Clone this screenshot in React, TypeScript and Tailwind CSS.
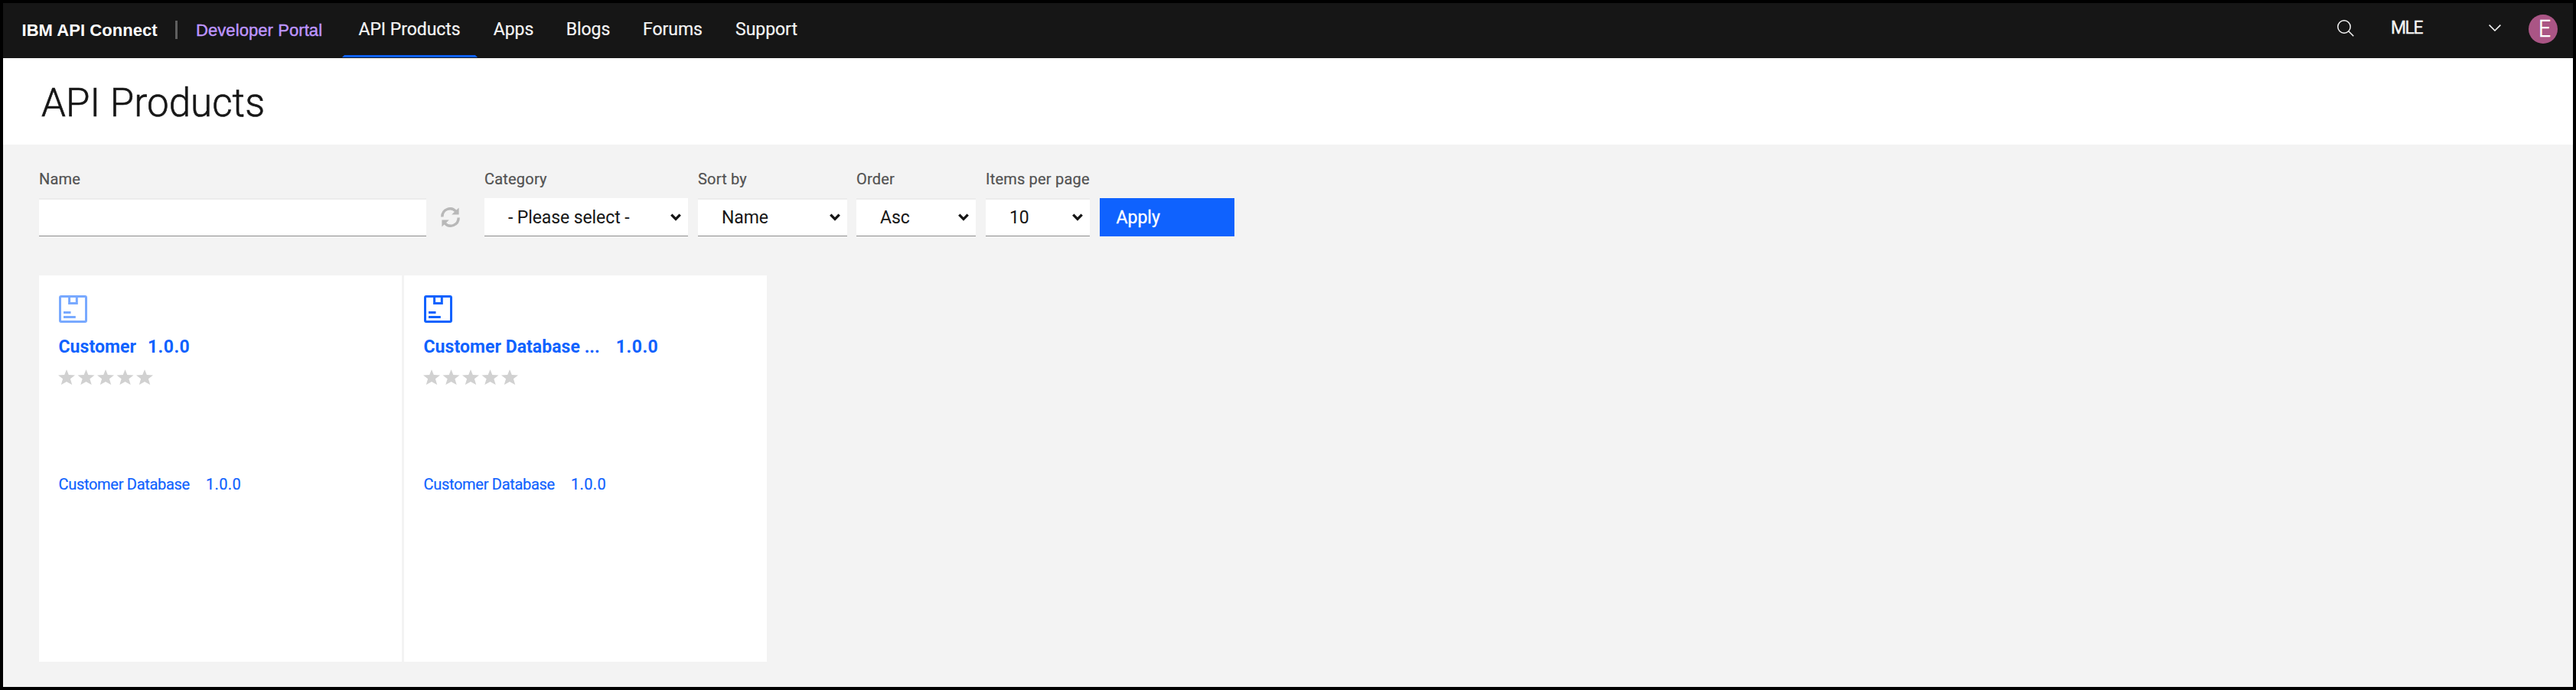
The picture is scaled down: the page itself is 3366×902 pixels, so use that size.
import type { ReactNode } from "react";

const NAV = [
  { label: "API Products", width: "w-[177px]", active: true },
  { label: "Apps", width: "w-[95px]" },
  { label: "Blogs", width: "w-[100px]" },
  { label: "Forums", width: "w-[121px]" },
  { label: "Support", width: "w-[124px]" },
];

function Header() {
  return (
    <header className="flex h-[72px] items-start bg-[#161616] text-[23px] text-[#f4f4f4]">
      <div className="flex h-[68px] w-[442.5px] items-center pl-[24.5px] font-['Liberation_Sans',sans-serif] text-[22px]">
        <span className="w-[200.5px] pt-0.5 font-bold tracking-[0.05px] whitespace-nowrap text-white">IBM API Connect</span>
        <span className="mt-0.5 h-6 w-[2.5px] bg-[#5f5f5f]" />
        <span className="ml-[24.5px] pt-0.5 tracking-[0.08px] whitespace-nowrap text-[#be95ff] [-webkit-text-stroke:0.4px_#be95ff]">
          Developer Portal
        </span>
      </div>
      <nav className="flex">
        {NAV.map((n) => (
          <a key={n.label} className={`${n.width} flex flex-col whitespace-nowrap`}>
            <span className="flex h-[68px] items-center justify-center pt-[3px] tracking-[-0.05px] [-webkit-text-stroke:0.2px_#f4f4f4]">
              {n.label}
            </span>
            {n.active && (
              <svg className="h-[3px] w-full" viewBox="0 0 177 3" preserveAspectRatio="none">
                <path d="M3 0H174L177 3H0Z" fill="#0f62fe" />
              </svg>
            )}
          </a>
        ))}
      </nav>
      <div className="ml-auto flex h-[68px] items-center pr-5">
        <svg className="mb-0.5 size-[22px]" viewBox="0 0 22 22" fill="none" stroke="#f4f4f4" strokeWidth="1.5">
          <circle cx="9" cy="9" r="8.2" />
          <path d="M14.8 14.8L21.3 21.3" />
        </svg>
        <span className="mb-px ml-[48px] w-[128px] tracking-[-1.5px] [-webkit-text-stroke:0.3px_#f4f4f4]">
          MLE
        </span>
        <svg className="mb-[3px] h-[9px] w-4" viewBox="0 0 16 9" fill="none" stroke="#f4f4f4" strokeWidth="1.5">
          <path d="M.6.6L8 8 15.4.6" />
        </svg>
        <span className="ml-9 flex size-[38px] items-center justify-center rounded-full bg-[#aa5585] pt-px pl-[3px] text-[31px] font-light text-white [-webkit-text-stroke:0.6px_#fff]">
          <span className="inline-block scale-x-90">E</span>
        </span>
      </div>
    </header>
  );
}

function Field({ label, className, children }: { label: string; className: string; children: ReactNode }) {
  return (
    <div className={`flex flex-col gap-[13px] ${className}`}>
      <label className="text-[20px] leading-6 tracking-[0.2px] whitespace-nowrap text-[#525252] [-webkit-text-stroke:0.2px_#525252]">
        {label}
      </label>
      {children}
    </div>
  );
}

function Select({ value, inset = true }: { value: string; inset?: boolean }) {
  return (
    <button
      className={`flex h-[50px] w-full items-center justify-between border-b border-[#8d8d8d] bg-white pr-[9.5px] pl-[31px] text-[23px] tracking-[-0.1px] whitespace-nowrap text-[#161616] ${
        inset ? "border-t-2 border-t-[#ececec]" : "pt-px"
      }`}
    >
      <span className="pt-0.5">{value}</span>
      <svg className="mb-px h-[10px] w-[14px]" viewBox="0 0 14 10" fill="none" stroke="#161616" strokeWidth="3.4">
        <path d="M1.3 1.6L7 7.4 12.7 1.6" />
      </svg>
    </button>
  );
}

function Filters() {
  return (
    <form className="flex items-end">
      <Field label="Name" className="w-[506px]">
        <input className="h-[50px] w-full border-t-2 border-b border-t-[#ececec] border-b-[#8d8d8d] bg-white px-8 text-[23px] outline-none" />
      </Field>
      <svg className="mb-[12px] ml-[19px] h-[26px] w-[25px]" viewBox="0 0 25 26" fill="none">
        <path d="M1.8 12.4C1.8 2.4 13.5-1.6 19.6 5.2M23.2 13.6C23.2 23.6 11.5 27.6 5.4 20.8" stroke="#b8b8b8" strokeWidth="3.4" />
        <path d="M23.6.5V9.6H14.2Z M1.4 25.5V16.4H10.8Z" fill="#b8b8b8" />
      </svg>
      <Field label="Category" className="ml-8 w-[266px]">
        <Select value="- Please select -" inset={false} />
      </Field>
      <Field label="Sort by" className="ml-[13px] w-[195px]">
        <Select value="Name" />
      </Field>
      <Field label="Order" className="ml-3 w-[156px]">
        <Select value="Asc" />
      </Field>
      <Field label="Items per page" className="ml-[13px] w-[136px]">
        <Select value="10" />
      </Field>
      <button className="ml-[13px] flex h-[50px] w-44 items-center bg-[#0f62fe] pt-0.5 pl-[21.5px] text-[23px] text-white [-webkit-text-stroke:0.3px_#fff]">
        Apply
      </button>
    </form>
  );
}

function ProductIcon({ color }: { color: string }) {
  return (
    <svg className="h-9 w-[37px]" viewBox="0 0 37 36" fill="none" stroke={color} strokeWidth="3">
      <rect x="1.5" y="1.5" width="34" height="33" rx="1.5" />
      <path d="M13.6 1.5V10.4H23.3V1.5M6 22.5H15.5M6 28.5H21.8" />
    </svg>
  );
}

function Stars() {
  return (
    <svg className="mt-[15px] -ml-[1.5px] h-5 w-[125px]" viewBox="0 0 125 20" fill="#d1d1d1">
      {[0, 25.5, 51, 76.5, 102].map((x) => (
        <path
          key={x}
          transform={`translate(${x} 0)`}
          d="M11 0L13.8 6.9 22 7.5 15.9 12.3 18.2 20 11 15.9 3.8 20 6.1 12.3 0 7.5 8.2 6.9Z"
        />
      ))}
    </svg>
  );
}

function Card({ title, color, gap }: { title: string; color: string; gap: string }) {
  return (
    <article className="flex h-[505px] w-[474px] flex-col bg-white pt-[26px] pl-[26px] text-[#0f62fe]">
      <ProductIcon color={color} />
      <h3 className={`mt-[18px] flex text-[23px] leading-7 font-bold whitespace-nowrap ${gap}`}>
        <span className="-ml-[0.5px] tracking-[0.05px]">{title}</span>
        <span className="tracking-[0.5px]">1.0.0</span>
      </h3>
      <Stars />
      <div className="mt-[118px] flex gap-[21px] text-[20px] leading-6 whitespace-nowrap [-webkit-text-stroke:0.2px_#0f62fe]">
        <span className="-ml-[0.5px] tracking-[-0.3px]">Customer Database</span>
        <span className="tracking-[0.4px]">1.0.0</span>
      </div>
    </article>
  );
}

export default function App() {
  return (
    <div className="flex h-[902px] w-[3366px] flex-col border-4 border-black bg-[#f3f3f3] font-[Roboto,sans-serif]">
      <Header />
      <div className="h-[113px] bg-white pt-[29px] pl-[50px]">
        <h1 className="text-[51px] leading-[60px] font-light tracking-[0.1px] text-[#161616] [-webkit-text-stroke:0.6px_#161616]">
          API Products
        </h1>
      </div>
      <main className="flex flex-col gap-[51px] pt-[33px] pl-[47px]">
        <Filters />
        <section className="flex gap-[3px]">
          <Card title="Customer" color="#78a9ff" gap="gap-[15px]" />
          <Card title="Customer Database ..." color="#0f62fe" gap="gap-[21px]" />
        </section>
      </main>
    </div>
  );
}
